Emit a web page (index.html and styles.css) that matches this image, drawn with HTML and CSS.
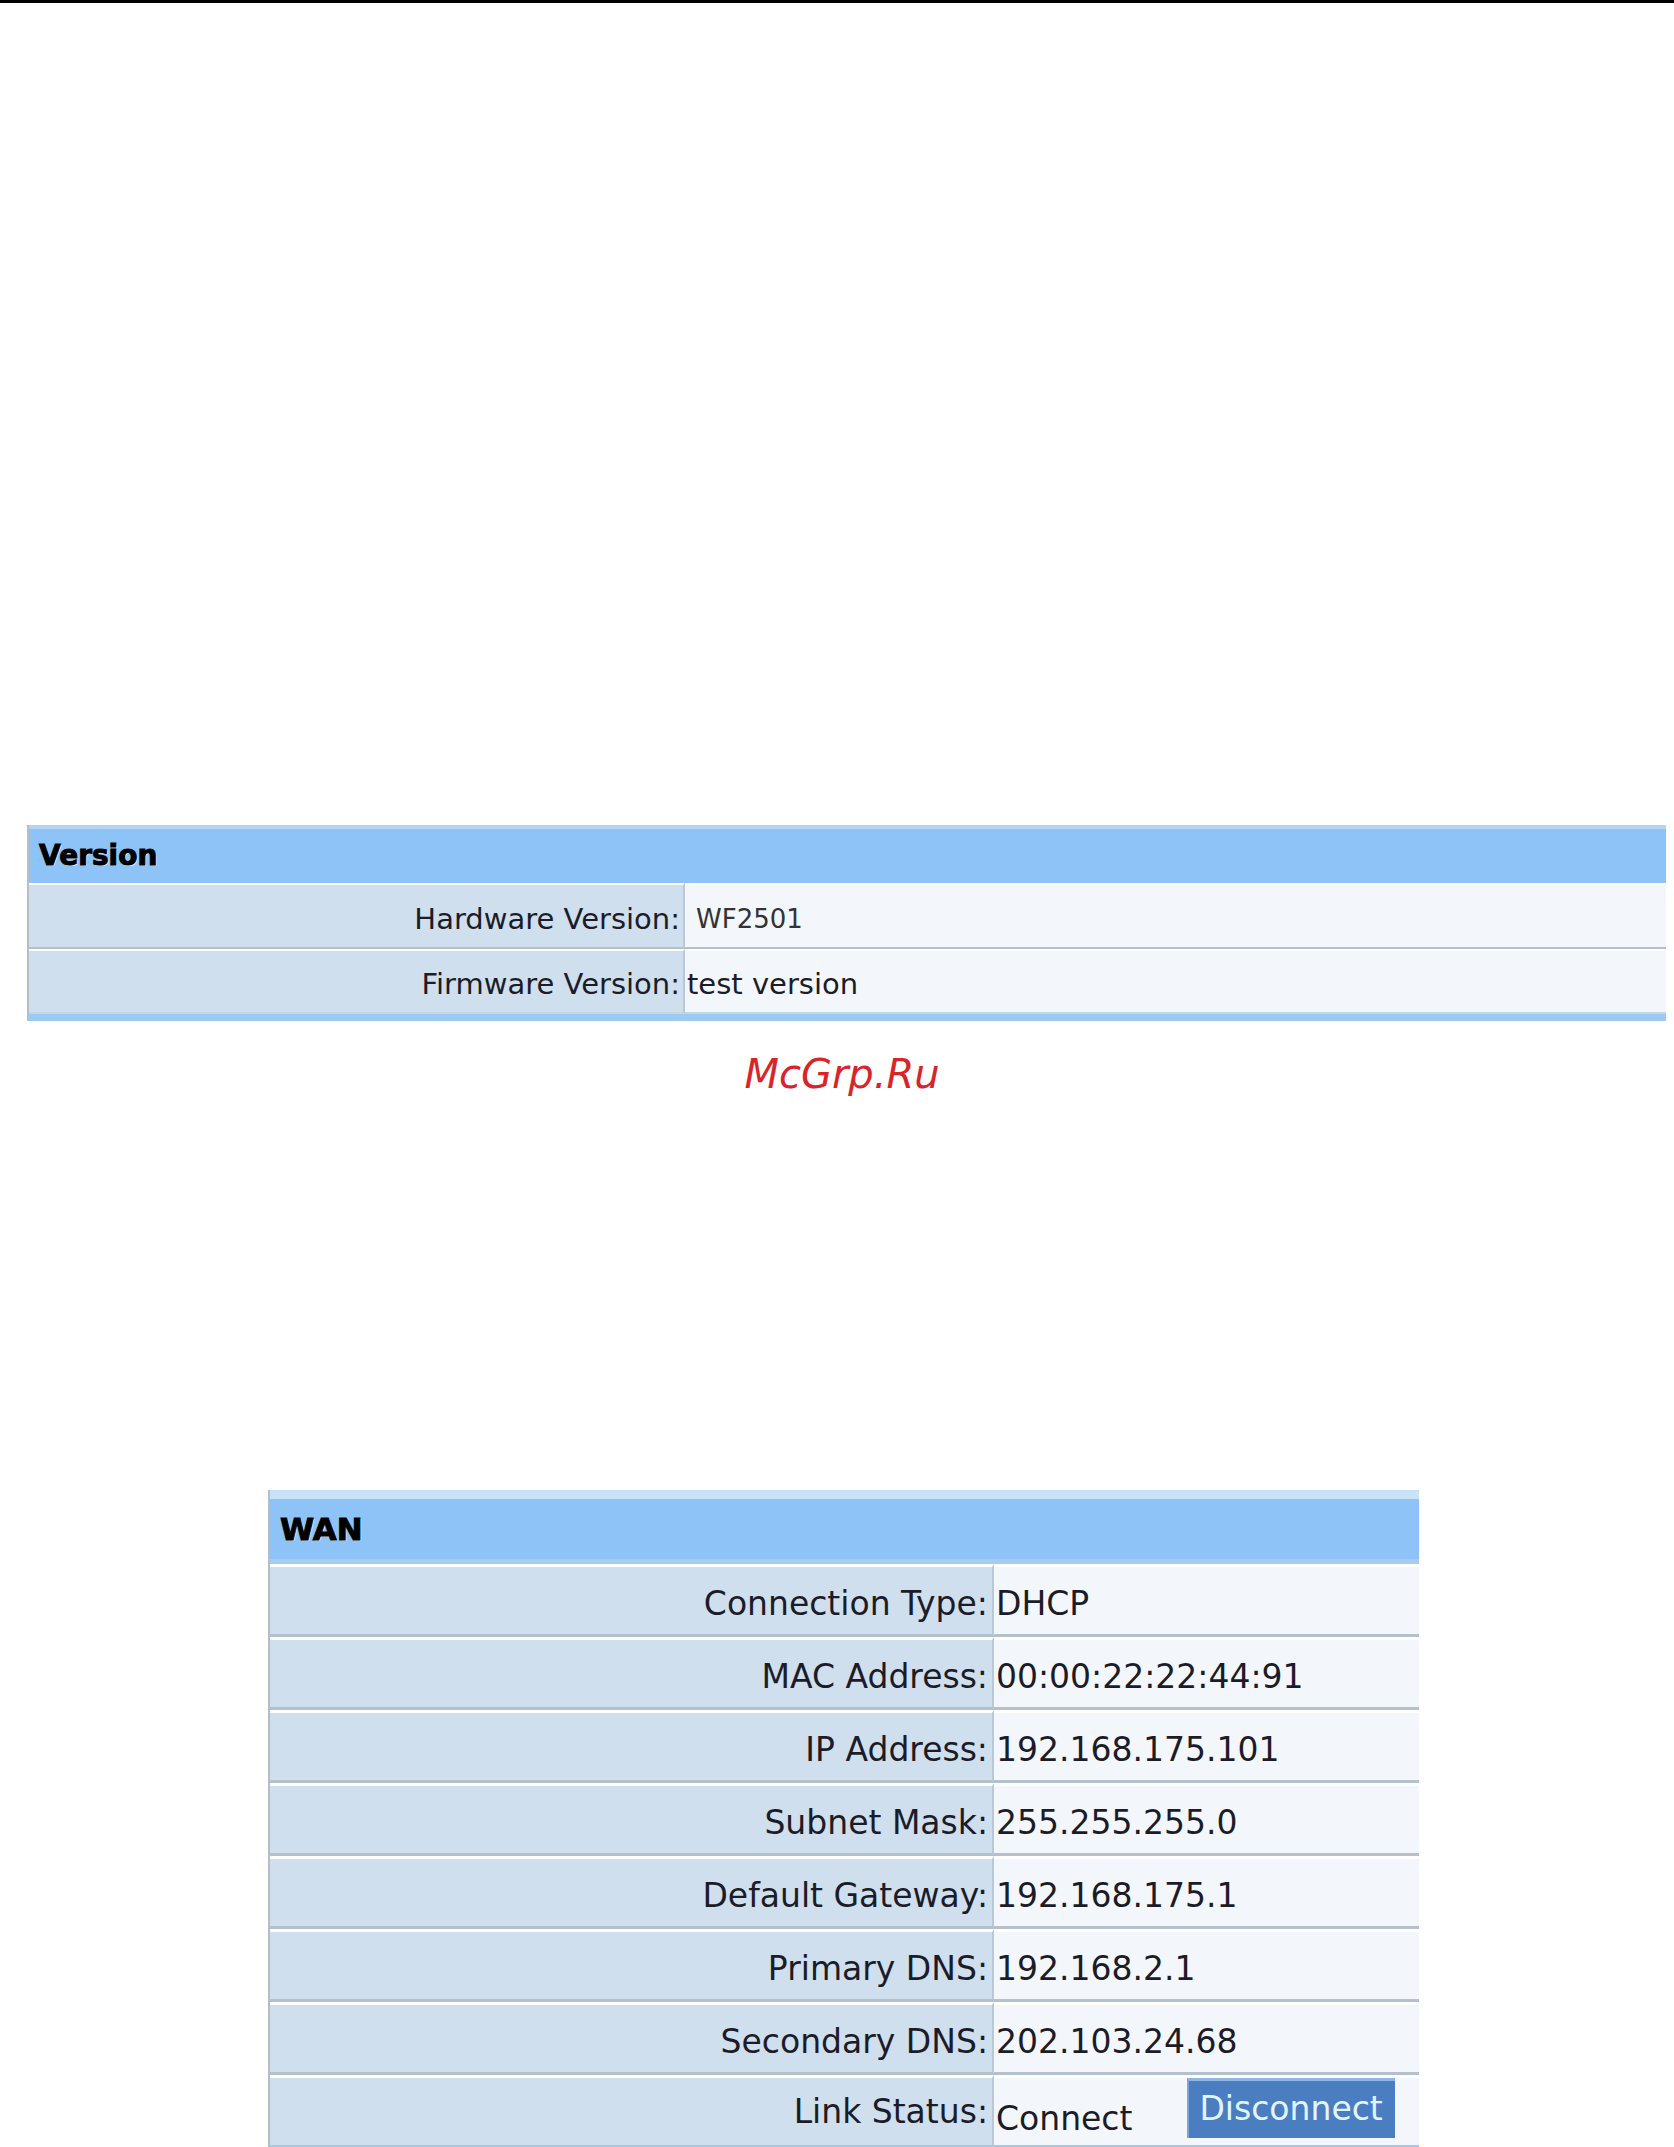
FILE: index.html
```html
<!DOCTYPE html>
<html lang="en">
<head>
  <meta charset="UTF-8">
  <title>Router Status</title>
  <link rel="stylesheet" href="styles.css">
</head>
<body>

  <div class="topline"></div>

  <table class="info version">
    <tr>
      <th colspan="2">Version</th>
    </tr>
    <tr>
      <td class="label">Hardware Version:</td>
      <td class="value"><span class="hw">WF2501</span></td>
    </tr>
    <tr class="last">
      <td class="label">Firmware Version:</td>
      <td class="value">test version</td>
    </tr>
  </table>

  <div class="mark">McGrp.Ru</div>

  <table class="info wan">
    <tr>
      <th colspan="2">WAN</th>
    </tr>
    <tr>
      <td class="label">Connection Type:</td>
      <td class="value">DHCP</td>
    </tr>
    <tr>
      <td class="label">MAC Address:</td>
      <td class="value">00:00:22:22:44:91</td>
    </tr>
    <tr>
      <td class="label">IP Address:</td>
      <td class="value">192.168.175.101</td>
    </tr>
    <tr>
      <td class="label">Subnet Mask:</td>
      <td class="value">255.255.255.0</td>
    </tr>
    <tr>
      <td class="label">Default Gateway:</td>
      <td class="value">192.168.175.1</td>
    </tr>
    <tr>
      <td class="label">Primary DNS:</td>
      <td class="value">192.168.2.1</td>
    </tr>
    <tr>
      <td class="label">Secondary DNS:</td>
      <td class="value">202.103.24.68</td>
    </tr>
    <tr class="last">
      <td class="label">Link Status:</td>
      <td class="value">
        <div class="link">
          <span class="state">Connect</span>
          <button type="button" class="btn">Disconnect</button>
        </div>
      </td>
    </tr>
  </table>

</body>
</html>
```

FILE: styles.css
```css
body {
  margin: 0;
  background-color: #fff;
  font-family: "DejaVu Sans", Verdana, sans-serif;
  color: #1c1c28;
}
.topline {
  height: 3px;
  background-color: #000;
}

/* status tables */
.info {
  border-spacing: 0;
  border-left: 2px solid #b5bec7;
}
.info th {
  text-align: left;
  font-weight: bold;
  color: #000;
  background-color: #8dc3f7;
  -webkit-text-stroke: 1px #000;
  text-shadow: 1px 1px 0 #e6f3ff;
  padding: 0 0 0 10px;
}
.info td {
  box-sizing: border-box;
  padding: 0;
  border-top: 2px solid #fff;
  border-bottom: 2px solid #b4c0cb;
  white-space: nowrap;
}
.info .label {
  text-align: right;
  background-color: #cfdfee;
  border-right: 2px solid #b7c8d8;
  padding-right: 3px;
}
.info .value {
  background-color: #f3f7fb;
  padding-left: 2px;
}
.info .last td {
  border-bottom-color: #c4d7e6;
}

/* Version block */
.version {
  width: 1639px;
  margin: 822px 0 0 27px;
  font-size: 29px;
  border-bottom: 7px solid #9ccaf2;
}
.version th {
  font-size: 28px;
  line-height: 54px;
  border-top: 4px solid #b2d5f4;
}
.version td {
  line-height: 55px;
  padding-top: 6px;
}
.version .label {
  width: 656px;
}
.version .hw {
  padding-left: 9px;
  font-size: 26px;
  color: #333;
}

.mark {
  margin-top: 29px;
  text-align: center;
  font-size: 40px;
  line-height: 48px;
  font-style: italic;
  color: #d9252a;
  padding-left: 10px;
}

/* WAN block */
.wan {
  width: 1151px;
  margin: 392px 0 0 268px;
  font-size: 33px;
}
.wan th {
  font-size: 31px;
  line-height: 60px;
  border-top: 9px solid #c8e2f8;
  border-bottom: 5px solid #a7cdee;
}
.wan td {
  border-top-width: 3px;
  border-bottom-width: 3px;
  line-height: 61px;
  padding-top: 6px;
}
.wan .label {
  width: 724px;
  padding-right: 4px;
}
.wan .last td {
  border-bottom-color: #9ccaf2;
  padding-top: 0;
  line-height: 67px;
}
.link {
  display: flex;
  align-items: center;
  height: 67px;
}
.state {
  margin-top: 14px;
  line-height: 40px;
}
.btn {
  margin: 0 0 8px 55px;
  width: 208px;
  height: 60px;
  padding: 0 0 0 10px;
  text-align: left;
  font-family: "DejaVu Sans", Verdana, sans-serif;
  font-size: 33px;
  line-height: 54px;
  color: #e2f5ff;
  background-color: #4a7ec0;
  border: none;
  border-top: 3px solid #8db6e4;
  border-left: 2px solid #7aa6d8;
  cursor: pointer;
}
```
